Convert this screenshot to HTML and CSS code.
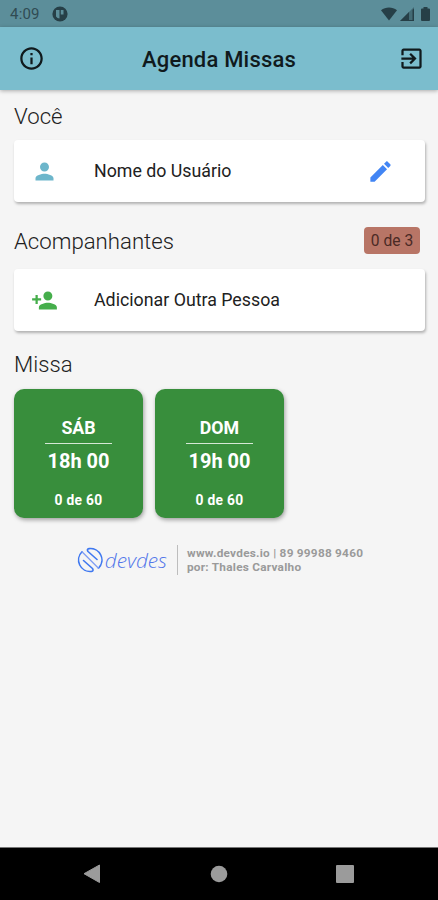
FILE: index.html
```html
<!DOCTYPE html>
<html lang="pt-BR">
<head>
    <meta charset="UTF-8">
    <meta name="viewport" content="width=device-width, initial-scale=1.0">
    <title>Agenda Missas</title>
    <link rel="stylesheet" href="styles.css">
</head>
<body>

    <div class="status-bar">
        <span class="clock">4:09</span>
        <svg class="status-app" width="16" height="16" viewBox="0 0 16 16">
            <circle cx="8" cy="8" r="7.6" fill="#263f47"/>
            <path d="M4 4h3.500v8.500a5 5 0 0 1-3.500-2zM8.800 4h2.700v4.500H8.800z" fill="#5c8e9a"/>
        </svg>
        <div class="status-icons">
            <svg width="16" height="14" viewBox="0 0 16 14"><path d="M0 3.300C4.600-.5 11.400-.5 16 3.300L8 13.500z"/></svg>
            <svg width="14" height="14" viewBox="0 0 14 14"><path d="M0 14L14 0v14z" opacity=".45"/><path d="M0 14L9 5v9zM12.500 3L14 1.500V14H9v-1h3.500z"/></svg>
            <svg class="battery" width="9" height="14" viewBox="0 0 9 14"><path d="M2.500 1.500V0h4v1.500H8a1 1 0 0 1 1 1V13a1 1 0 0 1-1 1H1a1 1 0 0 1-1-1V2.500a1 1 0 0 1 1-1z"/></svg>
        </div>
    </div>

    <header class="app-bar">
        <svg class="icon" viewBox="0 0 24 24"><path d="M11 7h2v2h-2zm0 4h2v6h-2zm1-9C6.480 2 2 6.480 2 12s4.480 10 10 10 10-4.480 10-10S17.520 2 12 2zm0 18c-4.410 0-8-3.590-8-8s3.590-8 8-8 8 3.590 8 8-3.590 8-8 8z"/></svg>
        <h1>Agenda Missas</h1>
        <svg class="icon" viewBox="0 0 24 24"><path d="M10.090 15.590L11.500 17l5-5-5-5-1.410 1.410L12.670 11H3v2h9.670l-2.580 2.590zM19 3H5c-1.110 0-2 .9-2 2v4h2V5h14v14H5v-4H3v4c0 1.100.89 2 2 2h14c1.100 0 2-.9 2-2V5c0-1.100-.9-2-2-2z"/></svg>
    </header>

    <main class="content">
        <h2>Você</h2>
        <div class="card">
            <svg class="icon user" viewBox="0 0 24 24"><path d="M12 12c2.210 0 4-1.790 4-4s-1.790-4-4-4-4 1.790-4 4 1.790 4 4 4zm0 2c-2.670 0-8 1.340-8 4v2h16v-2c0-2.660-5.330-4-8-4z"/></svg>
            <span class="card-text">Nome do Usuário</span>
            <svg class="icon edit" viewBox="0 0 24 24"><path d="M3 17.250V21h3.750L17.810 9.940l-3.750-3.750L3 17.250zM20.710 7.040c.39-.39.39-1.020 0-1.410l-2.340-2.340c-.39-.39-1.020-.39-1.410 0l-1.830 1.830 3.750 3.750 1.830-1.830z"/></svg>
        </div>

        <div class="section-row">
            <h2>Acompanhantes</h2>
            <span class="badge">0 de 3</span>
        </div>
        <div class="card">
            <svg class="icon add" viewBox="0 0 24 24"><path d="M15 12c2.210 0 4-1.790 4-4s-1.790-4-4-4-4 1.790-4 4 1.790 4 4 4zm-9-2V7H4v3H1v2h3v3h2v-3h3v-2H6zm9 4c-2.670 0-8 1.340-8 4v2h16v-2c0-2.660-5.330-4-8-4z"/></svg>
            <span class="card-text">Adicionar Outra Pessoa</span>
        </div>

        <h2 class="mass-title">Missa</h2>
        <div class="masses">
            <div class="mass">
                <div class="day">SÁB</div>
                <div class="hour">18h 00</div>
                <div class="seats">0 de 60</div>
            </div>
            <div class="mass">
                <div class="day">DOM</div>
                <div class="hour">19h 00</div>
                <div class="seats">0 de 60</div>
            </div>
        </div>

        <footer class="credits">
            <svg class="logo" width="26" height="26" viewBox="0 0 26 26">
                <g fill="none" stroke="#3f78f0" stroke-width="1.600" stroke-linecap="round" stroke-linejoin="round">
                    <path d="M5 4.800A11.500 11.500 0 0 0 14.500 24.400Q17 24 15.500 21.500L6.500 13.500"/>
                    <path d="M21.500 21.200A11.500 11.500 0 0 0 12 1.600Q9.500 2 11 4.500L20 12.500"/>
                    <path d="M5 4.800L21.500 21.200" stroke="#7f9df3" stroke-width="1.300"/>
                </g>
            </svg>
            <span class="brand">devdes</span>
            <div class="contact">
                <div class="contact-site">www.devdes.io | 89 99988 9460</div>
                <div class="contact-author">por: Thales Carvalho</div>
            </div>
        </footer>
    </main>

    <nav class="nav-bar">
        <svg width="18" height="20" viewBox="0 0 18 20"><path d="M16.500 1v17.500L1 9.700z" stroke="#9b9b9b" stroke-linejoin="round"/></svg>
        <svg width="18" height="18" viewBox="0 0 18 18"><circle cx="9" cy="9" r="8.300"/></svg>
        <svg width="18" height="18" viewBox="0 0 18 18"><rect width="18" height="18" rx="1"/></svg>
    </nav>

</body>
</html>
```

FILE: styles.css
```css
* {
    box-sizing: border-box;
}
body {
    margin: 0;
    height: 900px;
    display: flex;
    flex-direction: column;
    overflow: hidden;
    font-family: Roboto, "Liberation Sans", sans-serif;
    background: #f5f5f5;
    color: #212121;
}
svg {
    display: block;
    flex: none;
}
h1, h2 {
    margin: 0;
}
.status-bar {
    height: 27px;
    padding: 1px 8px 0 10px;
    display: flex;
    align-items: center;
    background: #5c8e9a;
    color: #304b53;
}
.clock {
    width: 42px;
    font-size: 15px;
    letter-spacing: 0.2px;
}
.status-icons {
    display: flex;
    gap: 3px;
    margin-left: auto;
    fill: #263f47;
}
.battery {
    margin-left: 4px;
}
.app-bar {
    height: 63px;
    padding: 0 13px 0 18px;
    display: flex;
    align-items: center;
    background: #7bbdcd;
    box-shadow: 0 1px 4px rgba(0, 0, 0, 0.3);
}
.app-bar h1 {
    flex: 1;
    padding: 1px 5px 0 0;
    text-align: center;
    font-size: 22px;
    font-weight: 500;
    letter-spacing: 0.2px;
    color: #101a1d;
}
.icon {
    width: 27px;
    height: 27px;
    fill: #101a1d;
}
.content {
    flex: 1;
    padding: 13px 13px 0 14px;
}
h2 {
    font-size: 22.2px;
    line-height: 26px;
    font-weight: 300;
}
.card {
    height: 62px;
    margin-top: 11px;
    padding: 0 31px 0 17px;
    display: flex;
    align-items: center;
    background: #fff;
    border-radius: 4px;
    box-shadow: 1px 2px 3px rgba(0, 0, 0, 0.28);
}
.card-text {
    flex: 1;
    margin-left: 36px;
    padding-bottom: 1px;
    font-size: 17.8px;
}
.user {
    fill: #6db6cb;
}
.edit {
    fill: #4285f4;
}
.add {
    fill: #45ae4b;
}
.section-row {
    display: flex;
    align-items: center;
    justify-content: space-between;
    margin-top: 25px;
    padding-right: 5px;
}
.section-row + .card {
    margin-top: 15px;
}
.badge {
    width: 56px;
    height: 27px;
    line-height: 28px;
    text-align: center;
    font-size: 15.6px;
    color: #4b2a25;
    background: #b87566;
    border-radius: 4px;
}
.mass-title {
    margin-top: 20px;
}
.masses {
    display: flex;
    gap: 12px;
    margin-top: 12px;
}
.mass {
    width: 129px;
    height: 129px;
    padding-top: 27px;
    display: flex;
    flex-direction: column;
    align-items: center;
    background: #388e3c;
    border-radius: 10px;
    box-shadow: 1px 2px 4px rgba(0, 0, 0, 0.35);
    color: #fff;
    font-weight: 700;
}
.day {
    width: 67px;
    height: 28px;
    line-height: 24px;
    text-align: center;
    font-size: 17.8px;
    border-bottom: 1px solid #d5e8d6;
}
.hour {
    margin-top: 5px;
    font-size: 20px;
    line-height: 24px;
}
.seats {
    margin-top: 19px;
    font-size: 13.8px;
    line-height: 17px;
    letter-spacing: 0.3px;
}
.credits {
    display: flex;
    align-items: center;
    justify-content: center;
    margin-top: 27px;
    padding-left: 1px;
}
.brand {
    margin-left: 2px;
    font-family: "Open Sans", sans-serif;
    font-size: 20.8px;
    line-height: 28px;
    font-style: italic;
    font-weight: 300;
    color: #5377ea;
}
.contact {
    margin-left: 10px;
    padding: 1px 0 1px 9px;
    border-left: 1px solid #bdbdbd;
    font-size: 11.8px;
    line-height: 14px;
    font-weight: 700;
    letter-spacing: 0.25px;
    color: #9a9a9a;
}
.nav-bar {
    height: 53px;
    padding: 0 84px 0 83px;
    display: flex;
    align-items: center;
    justify-content: space-between;
    background: #000;
    border-top: 1px solid #777;
    fill: #9b9b9b;
}
```
